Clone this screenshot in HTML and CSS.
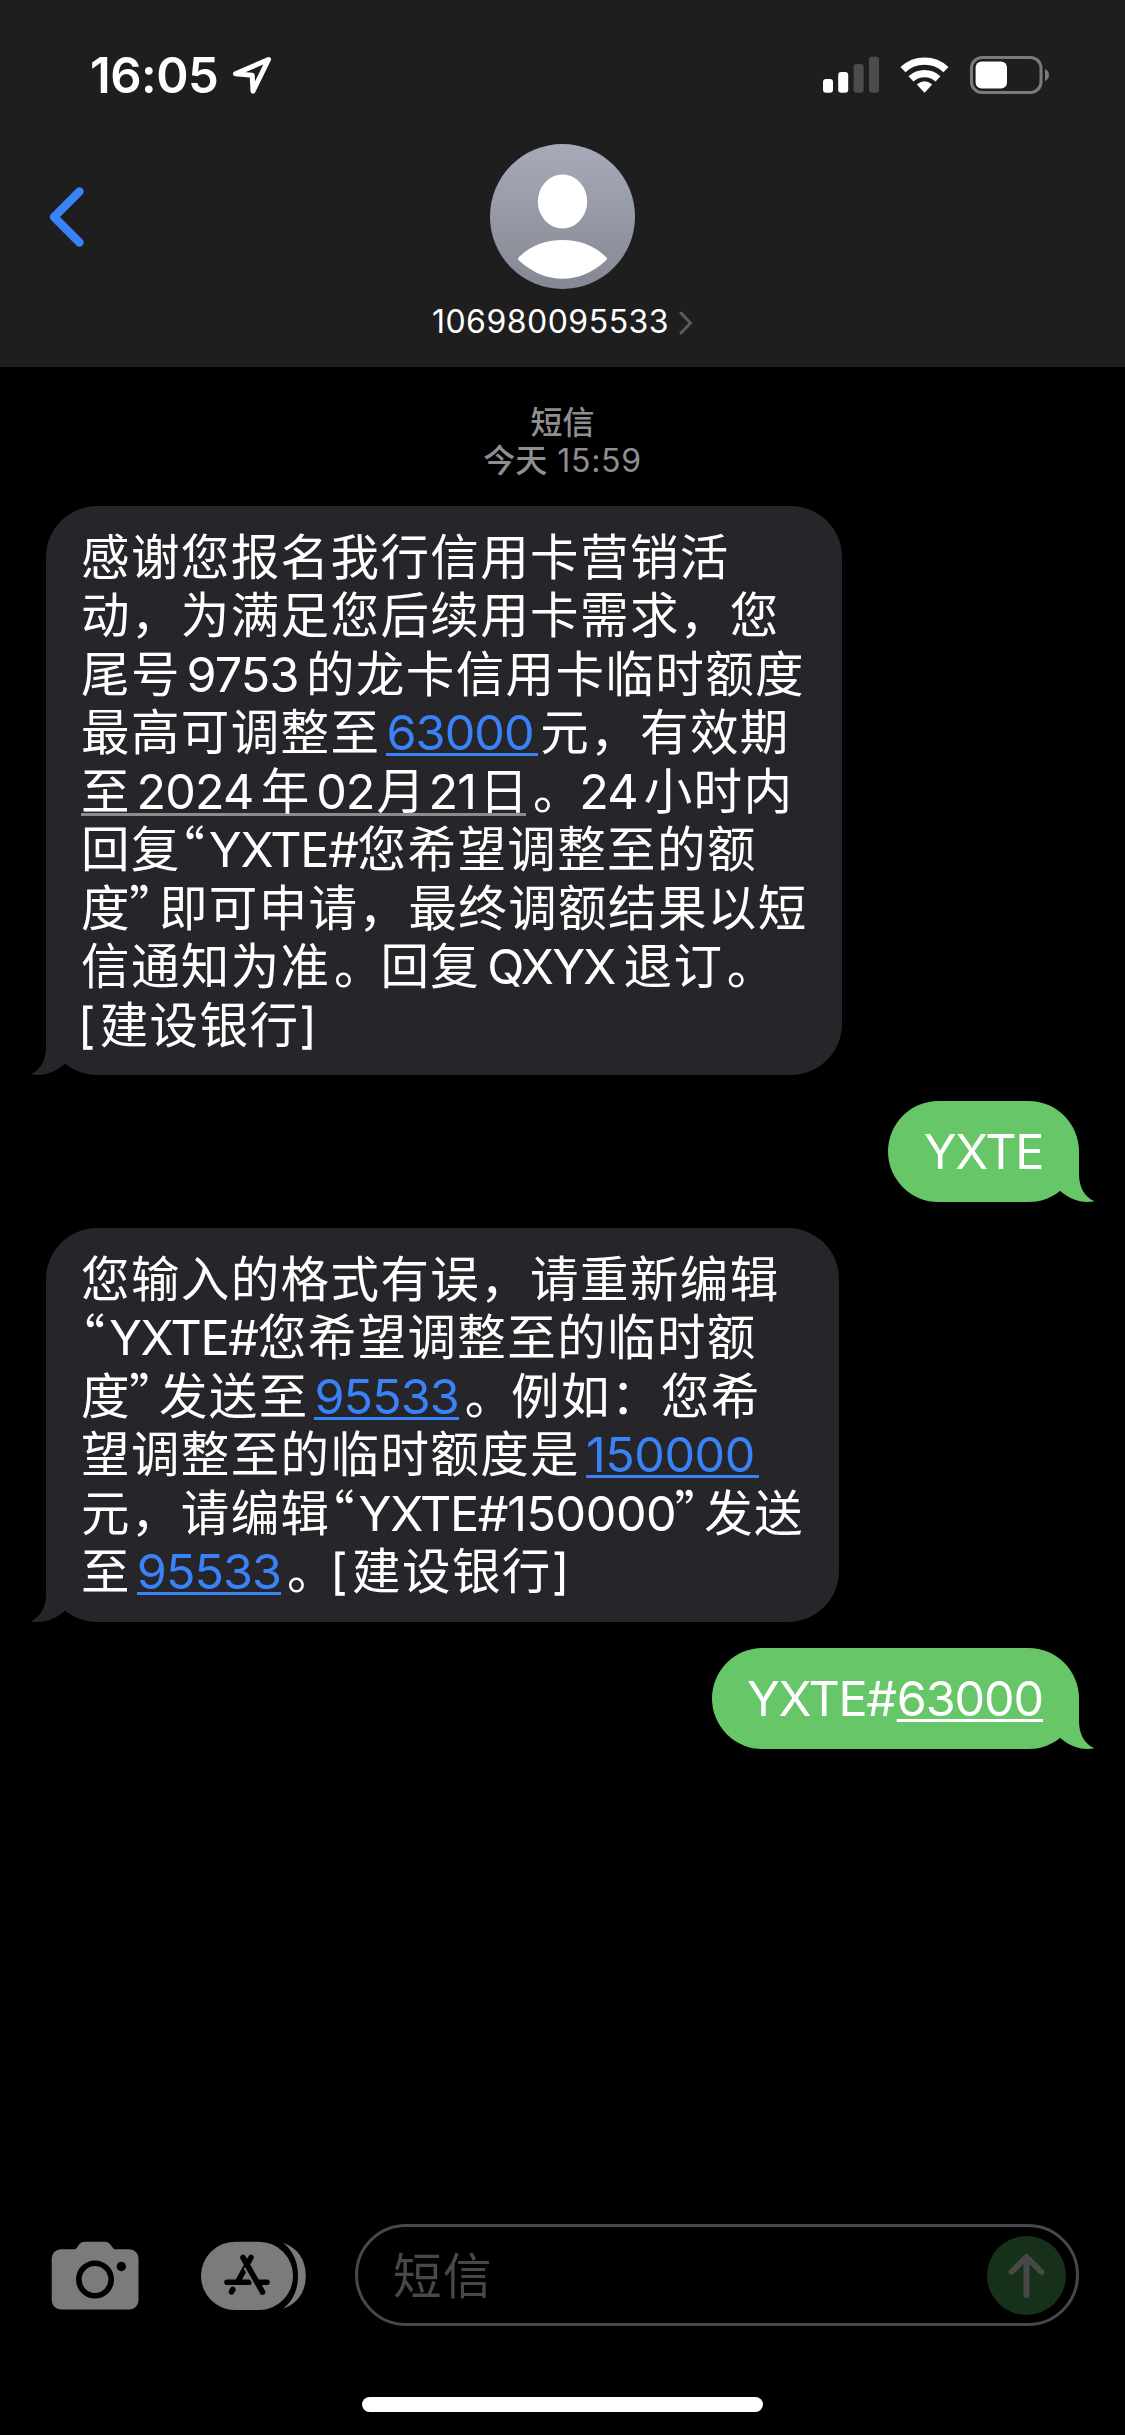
FILE: index.html
```html
<!DOCTYPE html>
<html lang="zh-CN">
<head>
<meta charset="utf-8">
<title>106980095533</title>
<link rel="stylesheet" href="styles.css">
</head>
<body>
<div class="screen">
  <header class="header">
    <div class="status">
      <div class="status-left">
        <span class="clock">16:05</span>
        <svg class="location" viewBox="0 0 42 42" width="42" height="42"><path d="M37.5 4.5 L4.5 18.8 L21.2 20.2 L22 36.2 Z" fill="none" stroke="#fff" stroke-width="5" stroke-linejoin="round"/></svg>
      </div>
      <div class="status-right">
        <svg width="57" height="37" viewBox="0 0 57 37"><rect x="0" y="23" width="10" height="13.7" rx="3" fill="#fff"/><rect x="15.2" y="16" width="10" height="20.7" rx="3" fill="#fff"/><rect x="30.6" y="8" width="10" height="28.7" rx="3" fill="#4c4c4c"/><rect x="46" y=".7" width="10" height="36" rx="3" fill="#4c4c4c"/></svg>
        <svg class="wifi" width="49" height="37" viewBox="0 0 49 37"><path d="M3 13.6 A31.5 31.5 0 0 1 46 13.6" fill="none" stroke="#fff" stroke-width="7.4"/><path d="M11 22.8 A20 20 0 0 1 38 22.8" fill="none" stroke="#fff" stroke-width="7.2"/><path d="M24.5 35.8 L17.8 28.6 Q24.5 23.2 31.2 28.6 Z" fill="#fff" stroke="#fff" stroke-width="1.4" stroke-linejoin="round"/></svg>
        <svg class="battery" width="80" height="38" viewBox="0 0 80 38"><rect x="1.5" y="1.5" width="69.5" height="35" rx="10.5" fill="none" stroke="#7b7b7b" stroke-width="3"/><rect x="5.6" y="5.6" width="31.4" height="26.8" rx="6" fill="#fff"/><path d="M75 13 C80.3 15 80.3 23 75 25 Z" fill="#7b7b7b"/></svg>
      </div>
    </div>
    <div class="nav">
      <svg class="back" width="38" height="62" viewBox="0 0 38 62"><path d="M31.5 5.5 L6 31 L31.5 56.5" fill="none" stroke="#3a82f7" stroke-width="8.4" stroke-linecap="round" stroke-linejoin="round"/></svg>
      <div class="contact">
        <svg width="145" height="145" viewBox="0 0 145 145">
          <defs><linearGradient id="avatar" x1="0" y1="0" x2="0" y2="1"><stop offset="0" stop-color="#a7abb9"/><stop offset="1" stop-color="#858892"/></linearGradient></defs>
          <circle cx="72.5" cy="72.5" r="72.5" fill="url(#avatar)"/>
          <ellipse cx="72.5" cy="57.5" rx="24.7" ry="27" fill="#fff"/>
          <path d="M28.5 113.5 Q46 96 72.5 96 Q99 96 116.5 113.5 Q117.5 115 116 116.5 Q96 134.7 72.5 134.7 Q49 134.7 29 116.5 Q27.5 115 28.5 113.5 Z" fill="#fff"/>
        </svg>
        <div class="name"><span>106980095533</span><svg width="14" height="24" viewBox="0 0 14 24"><path d="M2 2 L11.5 12 L2 22" fill="none" stroke="#5b5b5f" stroke-width="3" stroke-linecap="round" stroke-linejoin="round"/></svg></div>
      </div>
    </div>
  </header>

  <main class="thread">
    <div class="stamp"><div>短信</div><div>今天 <span class="stamp-time">15:59</span></div></div>

    <div class="bubble in first">
      <p>感谢您报名我行信用卡营销活</p>
      <p>动，为满足您后续用卡需求，您</p>
      <p>尾号<span class="num gap">9753</span>的龙卡信用卡临时额度</p>
      <p>最高可调整至<a class="num link">63000</a>元，有效期</p>
      <p><span class="date">至<span class="num gap">2024</span>年<span class="num month">02</span>月<span class="num day">21</span>日</span><span class="stop">。</span><span class="num hours">24</span>小时内</p>
      <p>回复<span class="quote">“</span><span class="lat">YXTE#</span>您希望调整至的额</p>
      <p>度<span class="quote">”</span>即可申请，最终调额结果以短</p>
      <p>信通知为准<span class="stop">。</span>回复<span class="lat code">QXYX</span>退订<span class="stop">。</span></p>
      <p><span class="lb">[</span>建设银行<span class="rb">]</span></p>
      <svg class="tail" width="68" height="51" viewBox="0 0 68 51"><path d="M16 0 V23 C16 36 10.5 46 .5 50.3 C13 52.5 25 49 35 39.8 L56 20 V0 Z" fill="#26252a"/></svg>
    </div>

    <div class="bubble out">
      <p><span class="lat">YXTE</span></p>
      <svg class="tail" width="68" height="51" viewBox="0 0 68 51"><path d="M16 0 V23 C16 36 10.5 46 .5 50.3 C13 52.5 25 49 35 39.8 L56 20 V0 Z" fill="#67c668"/></svg>
    </div>

    <div class="bubble in second">
      <p>您输入的格式有误，请重新编辑</p>
      <p><span class="quote">“</span><span class="lat">YXTE#</span>您希望调整至的临时额</p>
      <p>度<span class="quote">”</span>发送至<a class="num link tight">95533</a><span class="stop">。</span>例如：您希</p>
      <p>望调整至的临时额度是<a class="num link wide">150000</a></p>
      <p>元，请编辑<span class="quote">“</span><span class="lat">YXTE#</span><span class="num wide">150000</span><span class="quote">”</span>发送</p>
      <p>至<a class="num link tight">95533</a><span class="stop">。</span><span class="lb">[</span>建设银行<span class="rb">]</span></p>
      <svg class="tail" width="68" height="51" viewBox="0 0 68 51"><path d="M16 0 V23 C16 36 10.5 46 .5 50.3 C13 52.5 25 49 35 39.8 L56 20 V0 Z" fill="#26252a"/></svg>
    </div>

    <div class="bubble out">
      <p><span class="lat">YXTE#</span><span class="num underlined">63000</span></p>
      <svg class="tail" width="68" height="51" viewBox="0 0 68 51"><path d="M16 0 V23 C16 36 10.5 46 .5 50.3 C13 52.5 25 49 35 39.8 L56 20 V0 Z" fill="#67c668"/></svg>
    </div>
  </main>

  <footer class="composer">
    <svg class="camera" width="88" height="69" viewBox="0 0 88 69"><path d="M24 9 L28.5 3 Q30.5 .7 33.5 .7 H54 Q57 .7 59 3 L63.5 9 Z" fill="#7b7b7b"/><rect x=".7" y="8.3" width="86.8" height="60.2" rx="9" fill="#7b7b7b"/><circle cx="44" cy="38.5" r="16.2" fill="none" stroke="#000" stroke-width="5.6"/><circle cx="70.3" cy="25.5" r="4.7" fill="#000"/></svg>
    <svg class="apps" width="106" height="70" viewBox="0 0 106 70">
      <rect x="0" y=".7" width="92" height="68.3" rx="34" fill="#7b7b7b"/>
      <path d="M82 1.8 C97 7 104.8 19 104.8 34.8 C104.8 50.5 97 62.5 82 67.8 C92 60 97 48.5 97 34.8 C97 21 92 9.5 82 1.8 Z" fill="#7b7b7b"/>
      <g fill="none" stroke-linecap="round"><path d="M50 16.5 L36.5 41 M31.8 48.5 L30.5 50.8 M26 41.3 H48" stroke="#000" stroke-width="5.6"/><path d="M46.5 25 L60 49" stroke="#7b7b7b" stroke-width="9" stroke-linecap="butt"/><path d="M42 16.5 L61.5 51 M58 41.3 H66" stroke="#000" stroke-width="5.6"/></g>
    </svg>
    <div class="field"><span class="placeholder">短信</span>
      <svg width="79" height="79" viewBox="0 0 79 79"><circle cx="39.5" cy="39.5" r="39.5" fill="#17301a"/><path d="M39.5 59 V21 M24.5 36 L39.5 21 L54.5 36" fill="none" stroke="#48484b" stroke-width="6" stroke-linecap="round" stroke-linejoin="round"/></svg>
    </div>
  </footer>
  <div class="home"></div>
</div>
</body>
</html>
```
FILE: styles.css
```css
* { box-sizing: border-box; }
body { margin: 0; background: #000; color: #fff; font-family: Inter, "Noto Sans CJK SC", sans-serif; }
p { margin: 0; height: 58.5px; }
svg { display: block; flex: none; }
.screen { width: 1125px; height: 2435px; display: flex; flex-direction: column; background: #000; overflow: hidden; }

.header { flex: none; height: 367px; background: #1e1e1e; border-bottom: 1px solid #232324; }
.status { height: 144px; display: flex; justify-content: space-between; padding: 0 75px 0 90px; }
.status-left, .status-right { display: flex; align-items: flex-start; }
.clock { font-size: 49px; font-weight: 600; line-height: 60px; letter-spacing: -0.5px; margin-top: 46px; }
.location { margin: 55px 0 0 13px; }
.status-right { padding-top: 56px; }
.wifi { margin-left: 20px; }
.battery { margin-left: 21px; }
.nav { display: grid; grid-template-columns: 1fr auto 1fr; }
.back { margin: 42px 0 0 47.5px; }
.contact { display: flex; flex-direction: column; align-items: center; }
.name { display: flex; align-items: center; gap: 10px; font-size: 32px; line-height: 40px; letter-spacing: 0.49px; margin-top: 12.5px; }
.name svg { margin-top: 2px; }

.thread { flex: 1; display: flex; flex-direction: column; padding: 37px 46px 0; gap: 26px; }
.stamp { font-size: 32px; line-height: 37.5px; font-weight: 500; color: #8e8e93; text-align: center; margin-bottom: 0.7px; }
.stamp-time { font-weight: 400; letter-spacing: 0.7px; margin-left: 1.5px; }

.bubble { position: relative; isolation: isolate; border-radius: 51px; font-size: 48.5px; line-height: 58.5px; white-space: nowrap; }
.in { align-self: flex-start; background: #26252a; padding: 23px 0 19.8px 35px; letter-spacing: 1.4px; }
.first { width: 796px; }
.second { width: 793px; }
.out { align-self: flex-end; background: #67c668; padding: 22.5px 36px 20px 35.3px; }
.tail { position: absolute; z-index: -1; bottom: 0; left: -16px; }
.out .tail { left: auto; right: -16px; transform: scaleX(-1); }

.num { letter-spacing: -0.9px; }
.lat { letter-spacing: -1.3px; }
.gap { margin: 0 7.5px 0 5.7px; }
.month { margin: 0 2px 0 5.4px; }
.day { margin: 0 3.4px 0 2.2px; }
.hours { margin-right: 6px; }
.code { letter-spacing: -1.8px; margin: 0 9px 0 7px; }
.wide { letter-spacing: -0.45px; }
.quote { display: inline-block; width: 28px; line-height: 1; letter-spacing: 0; font-family: "Noto Sans CJK SC", sans-serif; font-feature-settings: "palt"; text-indent: -1px; }
.stop { margin: 0 -3.5px 0 3.5px; }
.lb { letter-spacing: 0; margin: 0 4.3px 0 -3.3px; }
.rb { letter-spacing: 0; }
.link, .date { background: linear-gradient(#3a82f7, #3a82f7) no-repeat 0 50px / 100% 3px; }
.link { color: #3a82f7; padding-right: 4.5px; margin: 0 2px 0 6px; }
.tight { padding-right: 0; margin: 0 2.3px 0 5.8px; }
.date { background-image: linear-gradient(#8c8c8e, #8c8c8e); background-position: 0 51.5px; background-size: calc(100% - 3px) 3px; }
.underlined { margin-left: 1px; letter-spacing: -1.1px; text-decoration: underline; text-decoration-thickness: 3px; text-underline-offset: 3px; text-decoration-skip-ink: none; }

.composer { flex: none; display: flex; align-items: flex-start; padding-left: 51px; height: 173px; }
.camera { margin-top: 17px; }
.apps { margin: 17px 0 0 62px; }
.field { margin-left: 48px; width: 724px; height: 102px; border: 3px solid #48484b; border-radius: 51px; display: flex; align-items: center; justify-content: space-between; padding: 0 10px 0 35px; font-size: 48.5px; letter-spacing: 1.4px; color: #48484c; }
.placeholder { margin-bottom: 5px; }
.home { flex: none; align-self: center; width: 401px; height: 15px; border-radius: 8px; background: #fff; margin-bottom: 23px; }
```
